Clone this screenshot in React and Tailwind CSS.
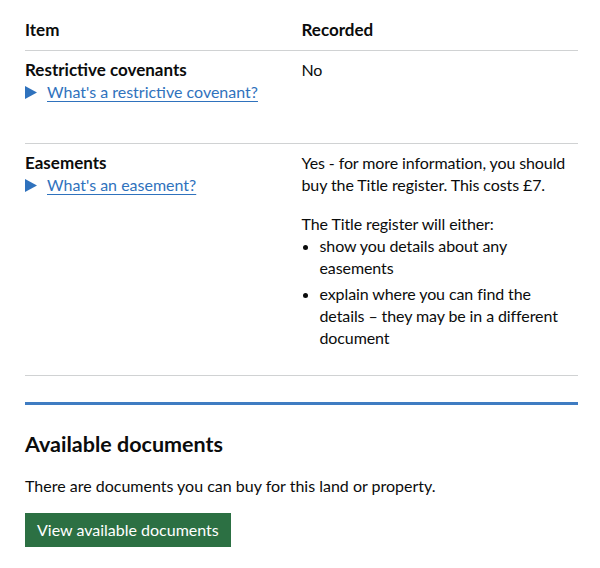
const rows = [
  {
    item: "Restrictive covenants",
    help: "What's a restrictive covenant?",
    recorded: <p>No</p>,
  },
  {
    item: "Easements",
    help: "What's an easement?",
    recorded: (
      <>
        <p className="mb-[17px]">
          Yes - for more information, you should buy the Title register. This costs £7.
        </p>
        <p>The Title register will either:</p>
        <ul className="list-disc pl-[18px] mb-[14px]">
          <li className="mb-[4px]">show you details about any easements</li>
          <li>explain where you can find the details – they may be in a different document</li>
        </ul>
      </>
    ),
  },
]

function HelpLink({ text }) {
  return (
    <div className="flex items-center gap-[10px] mb-[28px]">
      <svg width="12" height="13" viewBox="0 0 12 13" className="text-[#2f72bd]">
        <path d="M0 0 L12 6.5 L0 13 Z" fill="currentColor" />
      </svg>
      <a href="#" className="text-[#2f72bd] underline underline-offset-[3px] decoration-1">
        {text}
      </a>
    </div>
  )
}

export default function App() {
  return (
    <div
      className="bg-white text-[#0b0c0c] pl-[25px] pr-[22px] pt-[19px] text-[16px] leading-[22px]"
      style={{ fontFamily: "Lato, 'Noto Sans', sans-serif" }}
    >
      <div className="grid grid-cols-2 border-b border-[#d0d2d3] pb-[9px] font-bold text-[17px]">
        <div>Item</div>
        <div>Recorded</div>
      </div>

      {rows.map((row) => (
        <div key={row.item} className="grid grid-cols-2 border-b border-[#d0d2d3] pt-[8px] pb-[12px]">
          <div className="pr-[20px]">
            <div className="font-bold text-[17px]">{row.item}</div>
            <HelpLink text={row.help} />
          </div>
          <div className="tracking-[-0.1px]">{row.recorded}</div>
        </div>
      ))}

      <div className="mt-[26px] border-t-[3px] border-[#3f7cc2] pt-[24px]">
        <h2 className="text-[21.5px] leading-[30px] font-bold mb-[16px]">Available documents</h2>
        <p className="mb-[16px]">There are documents you can buy for this land or property.</p>
        <button className="bg-[#2c7043] text-white px-[12px] h-[34px] shadow-[0_2px_0_#002d18] text-[16px]">
          View available documents
        </button>
      </div>
    </div>
  )
}
